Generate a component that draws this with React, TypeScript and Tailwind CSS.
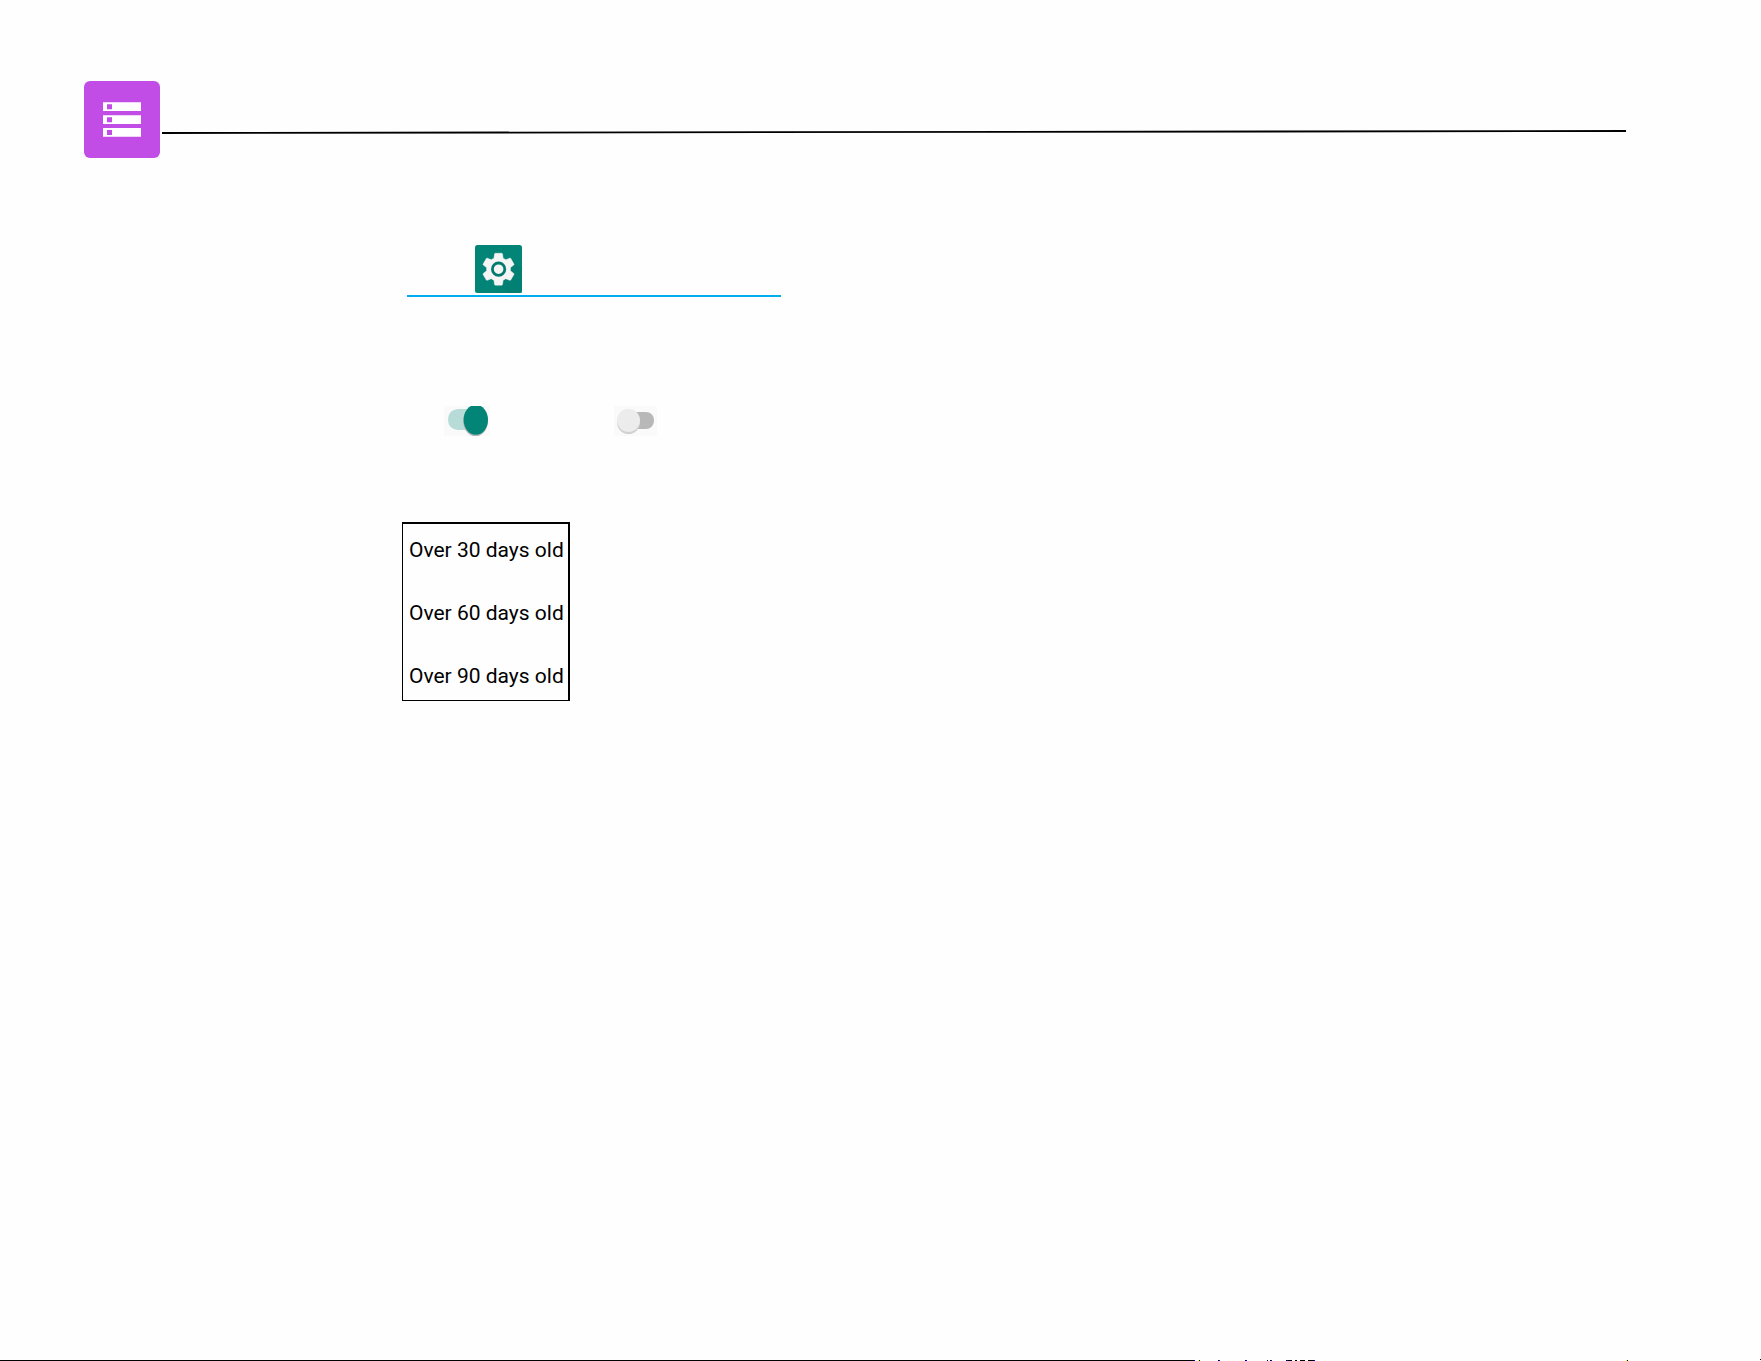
import { ReactNode } from "react";

const ageOptions = ["Over 30 days old", "Over 60 days old", "Over 90 days old"];

function StorageIcon() {
	return (
		<svg
			className="h-[77px] w-[76px] shrink-0"
			viewBox="0 0 76 77"
			role="img"
			aria-label="Storage"
		>
			<rect width="76" height="77" rx="6" fill="#c24de6" />
			<path d="M19 21.300h38v8.700H19zM19 34.200h38v8.700H19zM19 47h38v8.700H19z" fill="#fff" />
			<path d="M23 23.300h5v5h-5zM23 36.200h5v5h-5zM23 49h5v5h-5z" fill="#c24de6" />
		</svg>
	);
}

function SettingsIcon() {
	return (
		<svg
			className="h-12 w-[47px]"
			viewBox="0 0 47 48"
			role="img"
			aria-label="Settings"
		>
			<rect width="47" height="48" rx="2.5" fill="#028577" />
			<path d="M37.500 15 47 25v23H33L19 37z" fill="#027b70" opacity=".5" />
			<g transform="translate(3.6 4.3) scale(1.66)">
				<path
					fill="#f5f5f5"
					stroke="#f5f5f5"
					strokeWidth=".3"
					strokeLinejoin="round"
					d="M19.14 12.94c.04-.3.06-.61.06-.94 0-.32-.02-.64-.07-.94l2.03-1.58c.18-.14.23-.41.12-.61l-1.92-3.32c-.12-.22-.37-.29-.59-.22l-2.39.96c-.5-.38-1.03-.7-1.62-.94l-.36-2.54c-.04-.24-.24-.41-.48-.41h-3.84c-.24 0-.43.17-.47.41l-.36 2.54c-.59.24-1.13.57-1.62.94l-2.39-.96c-.22-.08-.47 0-.59.22L2.74 8.87c-.12.21-.08.47.12.61l2.03 1.58c-.05.3-.09.63-.09.94s.02.64.07.94l-2.03 1.58c-.18.14-.23.41-.12.61l1.92 3.32c.12.22.37.29.59.22l2.39-.96c.5.38 1.03.7 1.62.94l.36 2.54c.05.24.24.41.48.41h3.84c.24 0 .44-.17.47-.41l.36-2.54c.59-.24 1.13-.56 1.62-.94l2.39.96c.22.08.47 0 .59-.22l1.92-3.32c.12-.22.07-.47-.12-.61l-2.01-1.58z"
				/>
			</g>
			<circle cx="23.6" cy="24.2" r="6.2" fill="#f5f5f5" stroke="#037a70" strokeWidth="2.800" />
		</svg>
	);
}

function Switch({
	label,
	defaultChecked,
	children,
}: {
	label: string;
	defaultChecked?: boolean;
	children: ReactNode;
}) {
	return (
		<label className="relative block cursor-pointer bg-[#fafafa]">
			<input
				type="checkbox"
				role="switch"
				aria-label={label}
				defaultChecked={defaultChecked}
				className="absolute inset-0 size-full appearance-none"
			/>
			{children}
		</label>
	);
}

export default function App() {
	return (
		<div className="flex min-h-screen flex-col bg-[#fefefe] font-['Roboto',sans-serif] text-black">
			<header className="flex items-start pt-[81px] pr-[135px] pl-[84px]">
				<StorageIcon />
				<svg
					className="mt-12 ml-0.5 h-1.5 min-w-0 flex-1"
					viewBox="0 0 1464 6"
					preserveAspectRatio="none"
					aria-hidden="true"
				>
					<path d="M0 4 1464 2" stroke="#000" strokeWidth="1.8" />
				</svg>
			</header>

			<main className="flex-1 pl-[402px]">
				<section className="mt-[87px] ml-[5px] w-[374px] border-b-2 border-[#00aeef] pb-0.5 pl-[68px]">
					<SettingsIcon />
				</section>

				<section className="mt-[109px] ml-[42px] flex gap-[124px]">
					<Switch label="Smart storage on" defaultChecked>
						<svg className="h-[30px] w-[46px]" viewBox="0 0 46 30">
							<path d="M14 3H34V24H14Q4 23 4 13.500Q4 4 14 3z" fill="#b7dbd7" />
							<ellipse cx="31.500" cy="15.500" rx="12.300" ry="15" fill="#b5b8b8" />
							<ellipse cx="31.800" cy="13.800" rx="12.200" ry="15" fill="#028577" />
						</svg>
					</Switch>
					<Switch label="Smart storage off">
						<svg className="h-[30px] w-[43px]" viewBox="0 0 43 30">
							<rect x="12" y="6" width="28" height="17" rx="8" fill="#b8b8b8" />
							<circle cx="14.500" cy="16.500" r="11.500" fill="#d2d2d2" />
							<circle cx="14.500" cy="14.300" r="11.500" fill="#ececec" />
						</svg>
					</Switch>
				</section>

				<ul className="mt-[86px] flex w-[168px] flex-col gap-[39px] border-t-2 border-r-2 border-b border-l border-black pt-[14px] pb-3 pl-1.5 text-[21px] leading-6 whitespace-nowrap">
					{ageOptions.map(option => (
						<li key={option}>{option}</li>
					))}
				</ul>
			</main>

			<footer className="flex items-end" aria-hidden="true">
				<div className="h-px w-[1194px] bg-black" />
				<svg className="h-0.5 min-w-0 flex-1" viewBox="0 0 567 2" preserveAspectRatio="none">
					<path
						d="M5 1h1v1h-1zM24 1h1v1h-1zM51 1h2v1h-2zM73 1h1v1h-1zM76 1h1v1h-1zM92 1h1v1h-1zM94 1h4v1h-4zM101 1h2v1h-2zM106 1h5v1h-5zM114 1h6v1h-6zM433 1h1v1h-1zM566 0h1v1h-1z"
						fill="#000"
					/>
					<path d="M0 1h1v1h-1zM25 1h1v1h-1zM52 1h1v1h-1zM77 1h1v1h-1zM93 1h1v1h-1zM120 1h1v1h-1z" fill="#00f" />
					<path d="M4 1h1v1h-1zM432 1h1v1h-1z" fill="#ff0" />
				</svg>
			</footer>
		</div>
	);
}
